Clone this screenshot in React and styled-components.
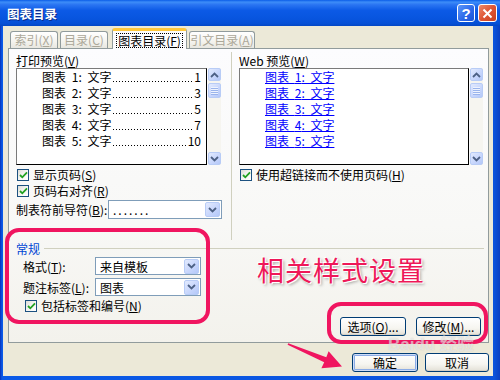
import React from 'react';
import styled, {createGlobalStyle} from 'styled-components';

const GlobalStyle = createGlobalStyle`
  html, body {
    margin: 0;
    padding: 0;
  }
  body {
    width: 500px;
    height: 380px;
    overflow: hidden;
    font-family: "Noto Sans CJK SC", "DejaVu Sans", sans-serif;
    font-size: 12px;
    color: #000;
  }
`

const printItems = [
    {n: 1, page: 1},
    {n: 2, page: 3},
    {n: 3, page: 5},
    {n: 4, page: 7},
    {n: 5, page: 10},
];

const ChevronDown = () => (
    <svg width="9" height="6" viewBox="0 0 9 6">
        <polyline points="1,1 4.5,4.5 8,1" fill="none" stroke="#4D6185" strokeWidth="1.8"/>
    </svg>
);

const ChevronUp = () => (
    <svg width="9" height="6" viewBox="0 0 9 6">
        <polyline points="1,5 4.5,1.5 8,5" fill="none" stroke="#4D6185" strokeWidth="1.8"/>
    </svg>
);

const CheckMark = () => (
    <svg width="9" height="8" viewBox="0 0 9 8">
        <polyline points="1,4 3.3,6.3 8,1.3" fill="none" stroke="#21A121" strokeWidth="1.8"/>
    </svg>
);

const Check = ({children}) => (
    <CheckRow>
        <CheckBox><CheckMark/></CheckBox>
        <span>{children}</span>
    </CheckRow>
);

const Combo = ({width, children}) => (
    <ComboBox $width={width}>
        <ComboText>{children}</ComboText>
        <ComboButton><ChevronDown/></ComboButton>
    </ComboBox>
);

const ScrollBar = () => (
    <Scroll>
        <ScrollButton><ChevronUp/></ScrollButton>
        <Thumb>
            <i/><i/><i/><i/>
        </Thumb>
        <ScrollButton style={{marginTop: 'auto'}}><ChevronDown/></ScrollButton>
    </Scroll>
);

const App = () => {
    return (
        <Window>
            <GlobalStyle/>
            <TitleBar>
                <Title>图表目录</Title>
                <TitleButtons>
                    <HelpButton>?</HelpButton>
                    <CloseButton>
                        <svg width="11" height="11" viewBox="0 0 11 11">
                            <path d="M1.5 1.5 L9.5 9.5 M9.5 1.5 L1.5 9.5" stroke="#fff" strokeWidth="2"/>
                        </svg>
                    </CloseButton>
                </TitleButtons>
            </TitleBar>

            <Body>
                <Tabs>
                    <Tab $w={48}>索引(<u>X</u>)</Tab>
                    <Tab $w={48}>目录(<u>C</u>)</Tab>
                    <ActiveTab><span>图表目录(<u>F</u>)</span></ActiveTab>
                    <Tab $w={66}>引文目录(<u>A</u>)</Tab>
                </Tabs>

                <Panel>
                    <TopRow>
                        <LeftCol>
                            <Label>打印预览(<u>V</u>)</Label>
                            <ListWrap>
                                <List $w={191}>
                                    {printItems.map(item => (
                                        <PrintItem key={item.n}>
                                            <span>图表 {item.n}: 文字</span>
                                            <Leader/>
                                            <span>{item.page}</span>
                                        </PrintItem>
                                    ))}
                                </List>
                                <ScrollBar/>
                            </ListWrap>
                            <Check>显示页码(<u>S</u>)</Check>
                            <Check>页码右对齐(<u>R</u>)</Check>
                            <LeaderRow>
                                <span>制表符前导符(<u>B</u>):</span>
                                <Combo width={114}>.......</Combo>
                            </LeaderRow>
                        </LeftCol>

                        <Divider/>

                        <RightCol>
                            <Label>Web 预览(<u>W</u>)</Label>
                            <ListWrap>
                                <List $w={230}>
                                    {printItems.map(item => (
                                        <WebItem key={item.n}>
                                            <a>图表 {item.n}: 文字</a>
                                        </WebItem>
                                    ))}
                                </List>
                                <ScrollBar/>
                            </ListWrap>
                            <Check>使用超链接而不使用页码(<u>H</u>)</Check>
                        </RightCol>
                    </TopRow>

                    <GroupHeader>
                        <span>常规</span>
                        <GroupLine/>
                    </GroupHeader>

                    <BottomRow>
                        <Form>
                            <FormRow>
                                <FormLabel>格式(<u>T</u>):</FormLabel>
                                <Combo width={106}>来自模板</Combo>
                            </FormRow>
                            <FormRow>
                                <FormLabel>题注标签(<u>L</u>):</FormLabel>
                                <Combo width={106}>图表</Combo>
                            </FormRow>
                            <FormCheck>
                                <Check>包括标签和编号(<u>N</u>)</Check>
                            </FormCheck>
                        </Form>

                        <RightArea>
                            <Annotation>相关样式设置</Annotation>
                            <ButtonRow>
                                <Button $w={66}>选项(<u>O</u>)...</Button>
                                <Button $w={65}>修改(<u>M</u>)...</Button>
                            </ButtonRow>
                        </RightArea>
                    </BottomRow>
                </Panel>

                <DialogButtons>
                    <Button $w={66} $default>确定</Button>
                    <Button $w={64}>取消</Button>
                </DialogButtons>
            </Body>

            <Highlight $x={5} $y={228} $w={205} $h={96}/>
            <Highlight $x={327} $y={302} $w={161} $h={42}/>
            <Arrow width="66" height="36" viewBox="0 0 66 36">
                <polygon
                    points="8.2,7.2 46.3,21.3 48.6,15.2 62,30.5 41.4,32.2 44.2,26.3 7.6,8.8"
                    fill="#F01560"
                />
            </Arrow>
            <Watermark>Baidu 经验</Watermark>
        </Window>
    );
};

const Window = styled.div`
  position: relative;
  width: 500px;
  height: 380px;
  display: flex;
  flex-direction: column;
  background: linear-gradient(90deg, #0831B8 0, #0A5AE8 2px, #0A53DC 494px, #0A3FC0 100%);
  overflow: hidden;
`

const TitleBar = styled.div`
  height: 26px;
  flex: none;
  display: flex;
  align-items: center;
  padding: 0 3px 0 7px;
  background: linear-gradient(180deg, #0A5DE8 0%, #3D8DF8 8%, #2A75F2 18%, #0C5AE6 40%, #0855DF 70%, #0650D6 90%, #0447C4 100%);
  box-sizing: border-box;
`

const Title = styled.div`
  color: #fff;
  font-weight: bold;
  font-size: 12.5px;
  text-shadow: 1px 1px 0 #0A2C8A;
`

const TitleButtons = styled.div`
  margin-left: auto;
  display: flex;
  gap: 3px;
`

const TitleButton = styled.div`
  width: 19px;
  height: 18px;
  box-sizing: border-box;
  border: 1px solid #fff;
  border-radius: 3px;
  display: flex;
  align-items: center;
  justify-content: center;
`

const HelpButton = styled(TitleButton)`
  width: 18px;
  background: linear-gradient(135deg, #5C97FA 0%, #2A66E8 60%, #1B53D4 100%);
  color: #fff;
  font-family: "Liberation Sans", sans-serif;
  font-weight: bold;
  font-size: 15px;
`

const CloseButton = styled(TitleButton)`
  background: linear-gradient(135deg, #EE8A6C 0%, #DE5534 50%, #C8401F 100%);
`

const Body = styled.div`
  flex: 1;
  margin: 0 7px 4px 3px;
  background: #ECE9D8;
  padding: 2px 4px 0 5px;
  display: flex;
  flex-direction: column;
`

const Tabs = styled.div`
  display: flex;
  align-items: flex-end;
  height: 20px;
  padding-left: 2px;
  position: relative;
  z-index: 1;
`

const Tab = styled.div`
  width: ${p => p.$w}px;
  height: 17px;
  margin-right: 2px;
  box-sizing: border-box;
  border: 1px solid #919B9C;
  border-bottom: none;
  border-radius: 3px 3px 0 0;
  background: linear-gradient(180deg, #FFFFFF 0%, #F4F3EE 60%, #E8E7E0 100%);
  color: #ACA899;
  display: flex;
  align-items: center;
  justify-content: center;
  line-height: 1;

  u {
    text-decoration: underline;
  }
`

const ActiveTab = styled.div`
  width: 75px;
  height: 21px;
  margin: 0 2px -1px 2px;
  box-sizing: border-box;
  border: 1px solid #919B9C;
  border-top: 3px solid #FFC83C;
  border-bottom: none;
  border-radius: 3px 3px 0 0;
  background: #FCFCFE;
  display: flex;
  align-items: center;
  justify-content: center;

  span {
    outline: 1px dotted #000;
    padding: 0 1px;
    line-height: 13px;
  }
`

const Panel = styled.div`
  height: 295px;
  box-sizing: border-box;
  border: 1px solid #919B9C;
  background: linear-gradient(180deg, #FCFCFE 0%, #F8F8F6 60%, #F3F2EC 100%);
  padding: 5px 3px 0 7px;
  display: flex;
  flex-direction: column;
`

const TopRow = styled.div`
  height: 186px;
  display: flex;
`

const LeftCol = styled.div`
  width: 206px;
  display: flex;
  flex-direction: column;
`

const RightCol = styled.div`
  width: 245px;
  display: flex;
  flex-direction: column;
`

const Divider = styled.div`
  width: 1px;
  margin: -2px 7px 0 9px;
  background: #D0D0BF;
`

const Label = styled.div`
  height: 13px;
  line-height: 13px;
  margin-bottom: 1px;
`

const ListWrap = styled.div`
  display: flex;
  gap: 1px;
  height: 97px;
`

const List = styled.div`
  width: ${p => p.$w}px;
  box-sizing: border-box;
  border: 1px solid #000;
  border-color: #7A7A7A #000 #000 #7A7A7A;
  background: #fff;
  padding: 0 5px 0 25px;
`

const PrintItem = styled.div`
  height: 16px;
  line-height: 16px;
  display: flex;
  white-space: pre;
  word-spacing: 3px;
`

const Leader = styled.span`
  flex: 1;
  margin: 0 1px 0 2px;
  background-image: linear-gradient(90deg, #000 1px, transparent 1px);
  background-size: 3px 1px;
  background-repeat: repeat-x;
  background-position: 0 12px;
`

const WebItem = styled.div`
  height: 16px;
  line-height: 16px;
  white-space: pre;
  word-spacing: 3px;

  a {
    color: #0000FF;
    text-decoration: underline;
    text-underline-offset: 1px;
  }
`

const Scroll = styled.div`
  width: 13px;
  display: flex;
  flex-direction: column;
  background: #F6F5F0;
`

const ScrollButton = styled.div`
  width: 13px;
  height: 13px;
  box-sizing: border-box;
  border: 1px solid #B8CCF6;
  border-radius: 2px;
  background: linear-gradient(135deg, #E2EAFE 0%, #C6D5FC 60%, #B4C8F8 100%);
  display: flex;
  align-items: center;
  justify-content: center;
`

const Thumb = styled(ScrollButton)`
  height: 15px;
  margin-top: 2px;
  flex-direction: column;
  gap: 1px;

  i {
    display: block;
    width: 7px;
    height: 1px;
    background: #EEF3FE;
    box-shadow: 0 1px 0 #9AB4EC;
  }
`

const CheckRow = styled.div`
  height: 12px;
  margin-top: 4px;
  display: flex;
  align-items: center;
  gap: 4px;
  line-height: 12px;
`

const CheckBox = styled.div`
  width: 12px;
  height: 12px;
  box-sizing: border-box;
  border: 1px solid #1C5180;
  background: linear-gradient(135deg, #DCDCD7 0%, #F5F5F2 50%, #FFFFFF 100%);
  display: flex;
  align-items: center;
  justify-content: center;
  margin-left: 1px;
`

const LeaderRow = styled.div`
  margin-top: 3px;
  display: flex;
  align-items: center;
  justify-content: space-between;
`

const ComboBox = styled.div`
  width: ${p => p.$width}px;
  height: 19px;
  box-sizing: border-box;
  border: 1px solid #7F9DB9;
  background: #fff;
  display: flex;
  align-items: center;
  padding: 1px;
`

const ComboText = styled.div`
  flex: 1;
  padding-left: 3px;
  line-height: 15px;
  letter-spacing: 2px;
`

const ComboButton = styled(ScrollButton)`
  width: 15px;
  height: 15px;
`

const GroupHeader = styled.div`
  margin-top: 2px;
  height: 13px;
  display: flex;
  align-items: center;
  gap: 4px;
  color: #0046D5;
  line-height: 13px;
`

const GroupLine = styled.div`
  flex: 1;
  height: 1px;
  background: #D0D0BF;
  margin-right: 1px;
`

const BottomRow = styled.div`
  flex: 1;
  display: flex;
`

const Form = styled.div`
  width: 206px;
  padding-left: 7px;
  box-sizing: border-box;
  display: flex;
  flex-direction: column;
`

const FormRow = styled.div`
  margin-top: 2px;
  display: flex;
  align-items: center;
  height: 18px;

  & + & {
    margin-top: 3px;
  }

  ${ComboBox} {
    height: 18px;
  }

  ${ComboText} {
    letter-spacing: 0;
  }
`

const FormLabel = styled.div`
  width: 72px;
`

const FormCheck = styled.div`
  padding-left: 1px;
`

const RightArea = styled.div`
  flex: 1;
  margin-left: 17px;
  padding: 1px 4px 6px 18px;
  display: flex;
  flex-direction: column;
`

const Annotation = styled.div`
  font-size: 27px;
  line-height: 28px;
  color: #EE1858;
  letter-spacing: 1px;
  text-shadow: 1px 1px 0 #fff, -1px -1px 0 #fff, 2px 2px 3px rgba(0, 0, 0, 0.35);
`

const ButtonRow = styled.div`
  margin-top: auto;
  display: flex;
  justify-content: flex-end;
  gap: 10px;
`

const Button = styled.div`
  width: ${p => p.$w}px;
  height: 19px;
  box-sizing: border-box;
  border: 1px solid #003C74;
  border-radius: 3px;
  background: linear-gradient(180deg, #FFFFFF 0%, #F6F5F0 60%, #E3E0D6 100%);
  display: flex;
  align-items: center;
  justify-content: center;
  box-shadow: ${p => p.$default
          ? 'inset 0 0 0 1px #CEDDF8, inset 0 0 0 2px #8CACE6'
          : 'inset 0 -1px 0 #D6D0C5'};
`

const DialogButtons = styled.div`
  margin-top: 10px;
  display: flex;
  justify-content: flex-end;
  gap: 7px;
`

const Highlight = styled.div`
  position: absolute;
  left: ${p => p.$x}px;
  top: ${p => p.$y}px;
  width: ${p => p.$w}px;
  height: ${p => p.$h}px;
  box-sizing: border-box;
  border: 4px solid #F01560;
  border-radius: 14px;
  pointer-events: none;
`

const Arrow = styled.svg`
  position: absolute;
  left: 280px;
  top: 336px;
`

const Watermark = styled.div`
  position: absolute;
  left: 388px;
  top: 330px;
  font-family: "Liberation Sans", "Noto Sans CJK SC", sans-serif;
  font-size: 17px;
  font-weight: bold;
  color: rgba(255, 255, 255, 0.55);
  text-shadow: 0 0 1px rgba(120, 120, 120, 0.35);
  pointer-events: none;
`

export default App;
